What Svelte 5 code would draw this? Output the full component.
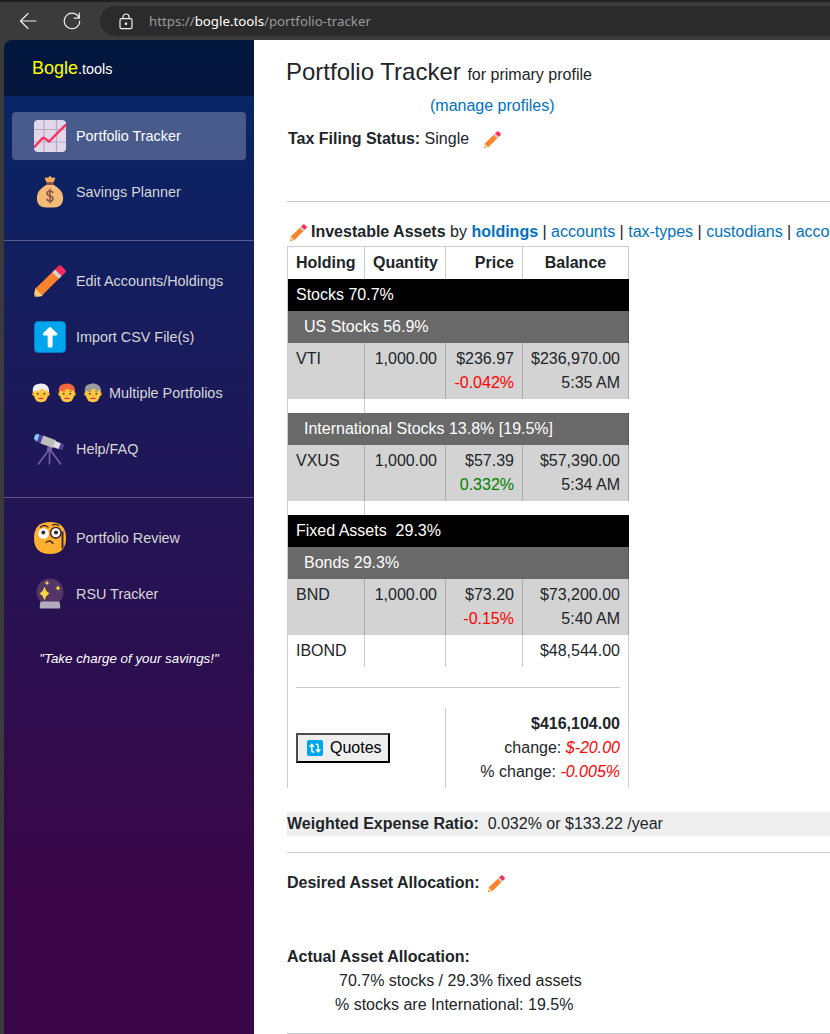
<script>
  const groups = [
    [['chart', 'Portfolio Tracker'], ['bag', 'Savings Planner']],
    [['pencil', 'Edit Accounts/Holdings'], ['up', 'Import CSV File(s)'], ['people', 'Multiple Portfolios'], ['scope', 'Help/FAQ']],
    [['monocle', 'Portfolio Review'], ['crystal', 'RSU Tracker']]
  ];
  const rows = [
    { head: 'Stocks 70.7%' },
    { sub: 'US Stocks 56.9%' },
    { name: 'VTI', qty: '1,000.00', price: '$236.97', pct: '-0.042%', bal: '$236,970.00', time: '5:35 AM' },
    { gap: true },
    { sub: 'International Stocks 13.8% [19.5%]' },
    { name: 'VXUS', qty: '1,000.00', price: '$57.39', pct: '0.332%', bal: '$57,390.00', time: '5:34 AM' },
    { gap: true },
    { head: 'Fixed Assets \u00a029.3%' },
    { sub: 'Bonds 29.3%' },
    { name: 'BND', qty: '1,000.00', price: '$73.20', pct: '-0.15%', bal: '$73,200.00', time: '5:40 AM' },
    { name: 'IBOND', bal: '$48,544.00', plain: true }
  ];
  const faces = [['#f3eef8', '#d9cde3'], ['#f3693b', '#e0522c'], ['#9b9b9b', '#7a7a7a']];
</script>

{#snippet pencil(size)}
  <svg class="pencil" width={size} height={size} viewBox="0 0 32 32">
    <path d="M1 24 20 5.500 26.500 12 8 30.500z" fill="#ff822d" />
    <path d="M1.200 23.500 8.800 31 1.800 32Q0 32 .1 30z" fill="#ffce7c" />
    <path d="M.4 29.500 2.600 31.800 1.500 32Q0 32 .1 30.500z" fill="#636363" />
    <path d="m18.300 7.200 3.400-3.300 6.500 6.500-3.300 3.300z" fill="#d3d3d3" />
    <path d="m21 4.500 3.200-3.300q1.800-1.700 3.500 0l3.200 3.200q1.600 1.700 0 3.500L27.600 11z" fill="#fc2d5c" />
  </svg>
{/snippet}

{#snippet icon(kind)}
  {#if kind === 'pencil'}
    {@render pencil(32)}
  {:else if kind === 'people'}
    <span class="people">
      {#each faces as [hair, edge], i}
        <svg width="18" height="20" viewBox="0 0 18 20">
          {#if i === 2}<circle cx="9" cy="3" r="2.600" fill={hair} />{/if}
          <path d="M1 10Q-.3 2.500 5 1.300q6-2 10 1.200 2.800 3 1.800 7.500z" fill={hair} />
          <ellipse cx="1.700" cy="11" rx="1.400" ry="1.900" fill="#ffb52e" />
          <ellipse cx="16.300" cy="11" rx="1.400" ry="1.900" fill="#ffb52e" />
          <path d="M2 8Q7 8 10 5.500q2.500 2.500 6 2v5q-1 6.800-7 6.800t-7-6.800z" fill="#ffc83d" />
          <path d="M4 8.500q1.500-1 3 0M11 8.500q1.500-1 3 0" fill="none" stroke={edge} stroke-width=".8" />
          <circle cx="5.700" cy="10.800" r="1" fill="#50344d" /><circle cx="12.300" cy="10.800" r="1" fill="#50344d" />
          <path d="M8.200 12.800h1.600" stroke="#e59620" stroke-width="1" />
          <path d="M6.500 15.500h5" fill="none" stroke="#d62b4a" stroke-width="1.200" />
        </svg>
      {/each}
    </span>
  {:else}
    <svg width="32" height="32" viewBox="0 0 32 32">
      {#if kind === 'chart'}
        <rect width="32" height="32" rx="4" fill="#e1d8ec" />
        <path d="M10 0v32M22.500 0v32M0 9.500h32M0 22h32" stroke="#b4acbc" stroke-width="1.200" />
        <path d="m0 27.500 8.500-9.300q1-.8 2 0l4.500 3.300L32 4.500" fill="none" stroke="#f92f60" stroke-width="2.300" />
      {:else if kind === 'bag'}
        <path d="M12.500 6.500 10.800 2.500Q11 1 12.800 1.700q1.400.6 2.200-1 1-1.400 2 0 .8 1.600 2.200 1 1.900-.6 2 .8L19.500 6.500z" fill="#f3ad61" />
        <path d="M12.800 8.500h6.400q10 5.500 10 13.500 0 9.500-9.500 9.500h-7.400q-9.500 0-9.500-9.500 0-8 10-13.500z" fill="#f3ba78" />
        <rect x="12.500" y="6.300" width="7" height="2.600" rx="1" fill="#8c5543" />
        <path d="M16 12.800v14.500M19 17q-.5-2-3-2t-3 2.300q0 2 3 2.700t3 2.700Q19 25 16 25t-3.200-2.200" fill="none" stroke="#8c5543" stroke-width="1.600" />
      {:else if kind === 'up'}
        <rect x=".4" y=".4" width="31.200" height="31.200" rx="4" fill="#00a6ed" stroke="#0083d5" stroke-width=".8" />
        <path d="M14.900 6.500q1.100-.8 2.200 0l6 5.800q.8 2.200-1.300 2.200h-3.200V25q0 1.500-1.500 1.500h-1.900q-1.500 0-1.500-1.500V14.500h-3.400q-2.200 0-1.300-2.200z" fill="#fff" />
      {:else if kind === 'scope'}
        <path d="m15 16.500-11 15M16 16.500l11 15M15.500 13v18.500" stroke="#7461a5" stroke-width="1.600" fill="none" />
        <rect x="13" y="14" width="5" height="4" rx="1" fill="#7461a5" />
        <g transform="translate(1.200 -.2) rotate(20)">
          <path d="M5 0Q.5 0 .5 3.700T5 7.500z" fill="#83cbff" />
          <path d="M4 0h5v8H4q2-4 0-8z" fill="#533a9e" />
          <path d="M8.500-.2H22v8.400H8.500z" fill="#bebebe" />
          <path d="M21.500.8H28v6.400h-6.500z" fill="#dedede" />
          <path d="M27.500.8h2.700q1.300 0 1.300 1.300v3.800q0 1.300-1.300 1.300h-2.700z" fill="#533a9e" />
        </g>
      {:else if kind === 'monocle'}
        <path d="M16 0q16 0 16 16t-16 16T0 16 16 0" fill="#ffb02e" />
        <circle cx="9.500" cy="11.500" r="5.300" fill="#fff" /><circle cx="9.300" cy="10.500" r="2" fill="#402a32" />
        <circle cx="21.800" cy="10.800" r="5.300" fill="#fff" stroke="#402a32" stroke-width="1.600" /><circle cx="22" cy="10.500" r="2.100" fill="#402a32" />
        <path d="M6.500 5.200Q10 2 14 5M18.500 3Q22 1.500 24.500 3.500M12 20.500q4-3.500 7 1" fill="none" stroke="#402a32" stroke-width="1.400" stroke-linecap="round" />
        <path d="M28.500 9.500v17" stroke="#402a32" stroke-width="2" />
      {:else if kind === 'crystal'}
        <circle cx="16" cy="14" r="13.500" fill="#533566" />
        <path d="M7.500 23.500h17q1 0 1.200 1l.6 4.500q0 1.500-1.500 1.500H7.200q-1.500 0-1.500-1.500l.6-4.500q.2-1 1.200-1z" fill="#b4acbc" />
        <path d="m10.500 8.700 1.900 4.300 3 2.500-3 2.500-1.900 4.300L8.600 18l-3-2.500 3-2.500zM24 7.300l.9 2 1.900.9-1.900.9-.9 2-.9-2-1.900-.9 1.900-.9zM13 2.300l.7 1.700 1.700.9-1.700.9-.7 1.700-.7-1.700-1.700-.9 1.700-.9z" fill="#fcd53f" />
      {/if}
    </svg>
  {/if}
{/snippet}

<div class="window">
  <header class="chrome">
    <svg class="back" width="18" height="18" viewBox="0 0 18 18"><path d="M17 9H2M9 1.500 1.500 9 9 16.500" /></svg>
    <svg class="reload" width="18" height="18" viewBox="0 0 18 18"><path d="M16.200 6.200A7.700 7.700 0 1 0 16.700 9M16.300 1.200v5h-5" /></svg>
    <div class="address">
      <svg class="lock" width="14" height="17" viewBox="0 0 14 17">
        <rect x="1" y="5.700" width="12" height="10" rx="1.500" /><path d="M4 5.500V4a3 3 0 0 1 6 0v1.500" /><circle cx="7" cy="10.700" r=".7" />
      </svg>
      <span class="url">https://<b>bogle.tools</b>/portfolio-tracker</span>
    </div>
  </header>

  <div class="page">
    <aside>
      <div class="brand"><span class="bogle">Bogle</span><span>.tools</span></div>
      {#each groups as items, g}
        <nav class:ruled={g > 0}>
          {#each items as [kind, label], i}
            <a class:active={g === 0 && i === 0}>{@render icon(kind)}<span>{label}</span></a>
          {/each}
        </nav>
      {/each}
      <p class="motto">"Take charge of your savings!"</p>
    </aside>

    <main>
      <h1>Portfolio Tracker <small>for primary profile</small></h1>
      <div class="manage"><span class="link">(manage profiles)</span></div>
      <div class="status"><span><b>Tax Filing Status:</b> Single</span>{@render pencil(17)}</div>
      <hr class="first" />
      <div class="views">
        {@render pencil(17)}<span><b>Investable Assets</b> by <b class="link">holdings</b> | <span class="link">accounts</span> | <span class="link">tax-types</span> | <span class="link">custodians</span> | <span class="link">account owners</span></span>
      </div>

      <table>
        <colgroup><col class="c1" /><col class="c2" /><col class="c3" /><col class="c4" /></colgroup>
        <thead><tr><th class="left">Holding</th><th>Quantity</th><th class="right">Price</th><th>Balance</th></tr></thead>
        <tbody>
          {#each rows as r}
            {#if r.head}
              <tr class="head"><td colspan="4">{r.head}</td></tr>
            {:else if r.sub}
              <tr class="sub"><td colspan="4">{r.sub}</td></tr>
            {:else if r.gap}
              <tr class="gap"><td></td><td colspan="3"></td></tr>
            {:else}
              <tr class:shaded={!r.plain}>
                <td>{r.name}</td>
                <td class="right">{r.qty ?? ''}</td>
                <td class="right">{r.price ?? ''}{#if r.pct}<div class={r.pct.startsWith('-') ? 'loss' : 'gain'}>{r.pct}</div>{/if}</td>
                <td class="right">{r.bal}{#if r.time}<div>{r.time}</div>{/if}</td>
              </tr>
            {/if}
          {/each}
          <tr class="divider"><td colspan="4"><hr /></td></tr>
          <tr class="total">
            <td colspan="2">
              <button>
                <svg width="16" height="16" viewBox="0 0 16 16">
                  <rect width="16" height="16" rx="2" fill="#00a6ed" />
                  <path d="M7.300 12H6.200Q4.800 12 4.800 10.500V5M2.700 6.700l2.100-2.300 2.100 2.300M8.700 4.300h1q1.500 0 1.500 1.500V11M9.100 9.500l2.100 2.300 2.100-2.300" fill="none" stroke="#fff" stroke-width="1.500" />
                </svg>
                <span>Quotes</span>
              </button>
            </td>
            <td colspan="2" class="right">
              <b>$416,104.00</b>
              <div>change: <i class="loss">$-20.00</i></div>
              <div>% change: <i class="loss">-0.005%</i></div>
            </td>
          </tr>
        </tbody>
      </table>

      <div class="ratio"><b>Weighted Expense Ratio:</b>&nbsp; 0.032% or $133.22 /year</div>
      <hr class="second" />
      <div class="desired"><b>Desired Asset Allocation:</b>{@render pencil(17)}</div>
      <div class="actual">
        <b>Actual Asset Allocation:</b>
        <div class="mix">70.7% stocks / 29.3% fixed assets</div>
        <div class="intl">% stocks are International: 19.5%</div>
      </div>
      <hr class="third" />
    </main>
  </div>
</div>

<style>
  :global(body) { background: #3b3b3b; overflow: hidden; }
  .window {
    width: 830px; height: 1034px; overflow: hidden; display: flex; flex-direction: column;
    font: 16px/24px "Liberation Sans", Arial, sans-serif; color: #212529; background: #3b3b3b;
  }
  .window, .window * { box-sizing: border-box; }
  svg { flex: none; display: block; }

  .chrome { height: 40px; flex: none; display: flex; align-items: center; border-top: 2px solid #202020; padding: 0 0 0 19px; }
  .chrome svg { fill: none; stroke: #f0f0f0; stroke-width: 1.2; stroke-linecap: round; stroke-linejoin: round; }
  .reload { margin-left: 26px; }
  .address {
    margin-left: 19px; flex: 1; height: 30px; background: #2b2b2b; border-radius: 15px 0 0 15px;
    padding-left: 19px; display: flex; align-items: center; gap: 16px;
  }
  .url { font: 13.250px/20px "Noto Sans", sans-serif; color: #9a9a9a; white-space: nowrap; }
  .url b { font-weight: 400; color: #fff; }

  .page { flex: 1; min-height: 0; display: flex; padding-left: 4px; }
  aside {
    width: 250px; flex: none; border-top-left-radius: 8px; overflow: hidden;
    background: linear-gradient(180deg, rgb(5, 39, 103) 0%, #3a0647 86%);
  }
  .brand { height: 56px; background: rgba(0, 0, 0, .4); padding: 16px 28px; color: #fff; font-size: 14.400px; }
  .bogle { color: #ff0; font-size: 18px; }
  nav { padding: 16px 8px 24px; display: flex; flex-direction: column; gap: 8px; }
  nav:first-of-type { height: 144px; }
  nav.ruled { border-top: 1px solid rgba(255, 255, 255, .28); }
  nav a {
    height: 48px; border-radius: 4px; padding-left: 22px; display: flex; align-items: center; gap: 10px;
    color: #d7d7d7; font-size: 14.400px; white-space: nowrap;
  }
  nav a.active { background: rgba(255, 255, 255, .25); color: #fff; }
  .people { display: flex; gap: 8px; margin-left: -2px; margin-right: -3px; }
  .motto { margin: 7px 0 0; text-align: center; color: #fff; font-size: 13.330px; font-style: italic; line-height: 20px; }

  main { flex: 1; min-width: 0; background: #fff; padding-left: 33px; overflow: hidden; white-space: nowrap; }
  h1 { margin: 17px 0 0 -1px; font-size: 24px; line-height: 30px; font-weight: 400; }
  small { font-size: 16px; }
  .manage { margin-top: 4px; padding-left: 143px; }
  .link { color: #0071c1; }
  .status { margin-top: 9px; display: flex; align-items: center; gap: 15px; padding-left: 1px; }
  hr { margin: 0; border: 0; height: 1px; background: #c8c9ca; }
  .first { margin-top: 50px; }
  .views { margin-top: 18px; margin-bottom: 2px; padding-left: 3px; display: flex; align-items: center; gap: 4px; }

  table { table-layout: fixed; width: 342px; border-collapse: separate; border-spacing: 0; }
  .c1 { width: 78px; } .c2 { width: 81px; } .c3 { width: 77px; } .c4 { width: 106px; }
  th, td { padding: 4px 8px; vertical-align: top; text-align: left; border-right: 1px solid rgba(0, 0, 0, .2); }
  th { text-align: center; height: 33px; border-top: 1px solid #ccc; }
  th:first-child, td:first-child { border-left: 1px solid #ccc; background-clip: padding-box; }
  th.left { text-align: left; }
  .right { text-align: right; }
  .head td { background: #000; color: #fff; border-right-color: #000; }
  .sub td { background: #696969; color: #fff; padding-left: 16px; border-right-color: #545454; }
  .shaded td { background-color: #d3d3d3; height: 56px; border-right-color: #a9a9a9; }
  .gap td { padding: 0; height: 14px; }
  .gap td:last-child { border-right: 0; }
  .divider td { height: 41px; padding: 20px 8px; }
  .total td:first-child { vertical-align: middle; }
  .loss { color: red; }
  .gain { color: green; }
  button {
    width: 94px; height: 30px; padding: 0 0 0 9px; display: flex; align-items: center; gap: 7px;
    background: #efefef; border: 2px solid; border-color: #4c4c4c #000 #000 #4c4c4c;
    font: inherit; color: #000;
  }

  .ratio { margin-top: 24px; background: #eee; }
  .second { margin-top: 16px; }
  .desired { margin-top: 18px; display: flex; align-items: center; gap: 8px; }
  .actual { margin-top: 50px; }
  .mix { padding-left: 52px; }
  .intl { padding-left: 48px; }
  .third { margin-top: 16px; }
</style>
